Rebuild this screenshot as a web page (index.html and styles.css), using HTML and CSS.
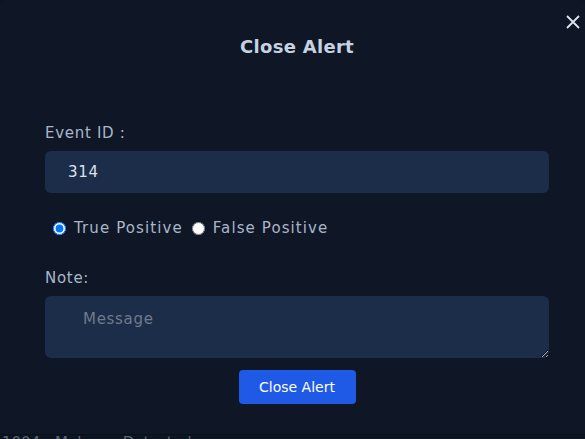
FILE: index.html
```html
<!DOCTYPE html>
<html lang="en">
<head>
    <meta charset="UTF-8">
    <meta name="viewport" content="width=device-width, initial-scale=1.0">
    <title>Close Alert</title>
    <link rel="stylesheet" href="styles.css">
</head>
<body>
    <div class="modal">
        <button type="button" class="close-btn" aria-label="Close">
            <svg width="16" height="16" viewBox="0 0 16 16">
                <path d="M2 2 L14 14 M14 2 L2 14" stroke="#dfe5ee" stroke-width="1.8" fill="none"/>
            </svg>
        </button>
        <h2 class="modal-title">Close Alert</h2>
        <form class="alert-form">
            <label for="eventId" class="field-label">Event ID :</label>
            <input type="text" id="eventId" class="field-input" value="314" readonly>

            <div class="radio-row">
                <label class="radio-label"><input type="radio" name="verdict" value="tp" checked> True Positive</label>
                <label class="radio-label"><input type="radio" name="verdict" value="fp"> False Positive</label>
            </div>

            <label for="note" class="field-label">Note:</label>
            <textarea id="note" class="field-textarea" placeholder="Message"></textarea>

            <div class="actions">
                <button type="button" class="submit-btn">Close Alert</button>
            </div>
        </form>
    </div>
    <div class="behind">1004 - Malware Detected</div>
</body>
</html>
```

FILE: styles.css
```css
body {
    margin: 0;
    background-color: #0d1422;
    font-family: "DejaVu Sans", sans-serif;
    overflow: hidden;
}
.modal {
    position: relative;
    box-sizing: border-box;
    height: 435px;
    background-color: #0f1727;
    border-radius: 6px 6px 0 0;
    border-bottom: 1px solid #0a101b;
    padding: 36px 36px 0 45px;
}
.close-btn {
    position: absolute;
    top: 14px;
    right: 4px;
    background: none;
    border: none;
    padding: 0;
    cursor: pointer;
}
.modal-title {
    margin: 0;
    text-align: center;
    font-size: 18px;
    letter-spacing: 0.3px;
    color: #c7d2e0;
}
.alert-form {
    margin-top: 67px;
}
.field-label {
    display: block;
    font-size: 15px;
    color: #a9b6c8;
    letter-spacing: 0.7px;
}
.field-input,
.field-textarea {
    display: block;
    box-sizing: border-box;
    width: 504px;
    margin-top: 9px;
    border: none;
    border-radius: 6px;
    background-color: #1c2d4a;
    font-family: "DejaVu Sans", sans-serif;
    font-size: 15px;
    letter-spacing: 0.7px;
    color: #dbe2ec;
    outline: none;
}
.field-input {
    height: 42px;
    padding: 0 23px;
}
.field-textarea {
    height: 62px;
    padding: 14px 38px 10px;
    resize: vertical;
}
.field-textarea::placeholder {
    color: #6f7a8a;
}
.radio-row {
    display: flex;
    align-items: center;
    gap: 9px;
    margin: 26px 0 32px 8px;
}
.radio-label {
    display: flex;
    align-items: center;
    gap: 8px;
    font-size: 15px;
    color: #a9b6c8;
    letter-spacing: 1.1px;
}
.radio-label input {
    margin: 0;
    width: 13px;
    height: 13px;
}
.actions {
    display: flex;
    justify-content: center;
    margin-top: 12px;
}
.submit-btn {
    width: 117px;
    height: 34px;
    border: none;
    border-radius: 4px;
    background-color: #1e5ae6;
    color: #ffffff;
    font-family: "DejaVu Sans", sans-serif;
    font-size: 14px;
    cursor: pointer;
}
.behind {
    margin-top: -1px;
    padding-left: 2px;
    font-size: 15px;
    color: #5d6572;
}
```
